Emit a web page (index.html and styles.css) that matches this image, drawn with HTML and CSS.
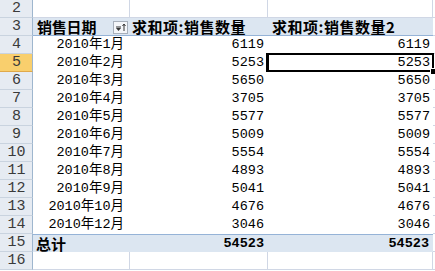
FILE: index.html
```html
<!DOCTYPE html>
<html>
<head>
<meta charset="utf-8">
<link rel="stylesheet" href="styles.css">
</head>
<body>
<div class="sheet">
  <div class="rh">2</div><div class="c"></div><div class="c"></div><div class="c"></div><div class="c cd"></div>

  <div class="rh">3</div>
  <div class="hd hd-a"><span>销售日期</span>
    <span class="fbtn"><svg width="15" height="13" viewBox="0 0 15 13"><rect x="0.5" y="0.5" width="14" height="12" fill="#f4f6f9" stroke="#a7afba"/><path d="M3 7h5l-2.5 3z" fill="#333"/><path d="M3 6h5" stroke="#333" stroke-width="1"/><path d="M11 10V3.5" stroke="#333" stroke-width="1"/><path d="M9.5 5l1.5-2 1.5 2" fill="none" stroke="#333" stroke-width="1"/></svg></span>
  </div>
  <div class="hd hd-b">求和项:销售数量</div>
  <div class="hd hd-c">求和项:销售数量2</div>
  <div class="c cd"></div>

  <div class="rh">4</div><div class="d da">2010年1月</div><div class="d">6119</div><div class="d dc">6119</div><div class="c cd"></div>
  <div class="rh rh-sel">5</div><div class="d da">2010年2月</div><div class="d">5253</div><div class="d dc sel">5253<span class="handle"></span></div><div class="c cd"></div>
  <div class="rh">6</div><div class="d da">2010年3月</div><div class="d">5650</div><div class="d dc">5650</div><div class="c cd"></div>
  <div class="rh">7</div><div class="d da">2010年4月</div><div class="d">3705</div><div class="d dc">3705</div><div class="c cd"></div>
  <div class="rh">8</div><div class="d da">2010年5月</div><div class="d">5577</div><div class="d dc">5577</div><div class="c cd"></div>
  <div class="rh">9</div><div class="d da">2010年6月</div><div class="d">5009</div><div class="d dc">5009</div><div class="c cd"></div>
  <div class="rh">10</div><div class="d da">2010年7月</div><div class="d">5554</div><div class="d dc">5554</div><div class="c cd"></div>
  <div class="rh">11</div><div class="d da">2010年8月</div><div class="d">4893</div><div class="d dc">4893</div><div class="c cd"></div>
  <div class="rh">12</div><div class="d da">2010年9月</div><div class="d">5041</div><div class="d dc">5041</div><div class="c cd"></div>
  <div class="rh">13</div><div class="d da">2010年10月</div><div class="d">4676</div><div class="d dc">4676</div><div class="c cd"></div>
  <div class="rh">14</div><div class="d da">2010年12月</div><div class="d">3046</div><div class="d dc">3046</div><div class="c cd"></div>

  <div class="rh">15</div><div class="tot tot-a">总计</div><div class="tot">54523</div><div class="tot dc">54523</div><div class="c cd"></div>

  <div class="rh">16</div><div class="c"></div><div class="c"></div><div class="c"></div><div class="c cd"></div>
</div>
</body>
</html>
```

FILE: styles.css
```css
html, body {
  margin: 0;
  padding: 0;
  background: #ffffff;
  overflow: hidden;
}

.sheet {
  display: grid;
  grid-template-columns: 33px 97px 138px 165px 1fr;
  grid-auto-rows: 18px;
  width: 435px;
  font-family: "Liberation Mono", "Noto Sans CJK SC", monospace;
  font-size: 13.5px;
  color: #000;
}

.sheet > div {
  box-sizing: border-box;
  line-height: 17px;
  white-space: nowrap;
  overflow: visible;
}

.rh {
  background: #e6ebf2;
  border-right: 1px solid #9eb6ce;
  border-bottom: 1px solid #c9d3df;
  color: #3a3a3a;
  text-align: center;
  font-size: 15px;
  padding-left: 1px;
}

.rh-sel {
  background: #f9cf6d;
  border-bottom-color: #e0a94a;
}

.c {
  border-right: 1px solid #d0d7e5;
  border-bottom: 1px solid #d0d7e5;
}

.cd {
  border-right: none;
}

.hd {
  background: #dce6f1;
  border-bottom: 1px solid #95b3d7;
  font-family: "Noto Sans CJK SC", sans-serif;
  font-weight: bold;
  font-size: 15px;
  line-height: 17px;
  padding-left: 2px;
  letter-spacing: -0.2px;
}

.hd-a {
  display: flex;
  justify-content: space-between;
  align-items: center;
  padding-left: 4px;
  padding-right: 2px;
}

.hd-b {
  letter-spacing: 0.5px;
}

.hd-c {
  padding-left: 4px;
  letter-spacing: 0.5px;
}

.fbtn {
  display: flex;
  margin-top: 1px;
}

.d {
  background: #fff;
  text-align: right;
  padding-right: 4px;
}

.da {
  padding-right: 6px;
}

.dc {
  padding-right: 3px;
}

.sel {
  position: relative;
}

.sel::before {
  content: "";
  position: absolute;
  left: -2px;
  top: -1px;
  right: -1px;
  bottom: 0;
  border: 2px solid #000;
  border-left-width: 3px;
}

.handle {
  position: absolute;
  right: -4px;
  bottom: -3px;
  width: 5px;
  height: 5px;
  background: #000;
  border: 1px solid #fff;
}

.tot {
  background: #dce6f1;
  border-top: 1px solid #95b3d7;
  font-weight: bold;
  text-align: right;
  padding-right: 4px;
  line-height: 16px;
}

.tot-a {
  text-align: left;
  font-family: "Noto Sans CJK SC", sans-serif;
  font-size: 15px;
  padding-left: 3px;
}
```
